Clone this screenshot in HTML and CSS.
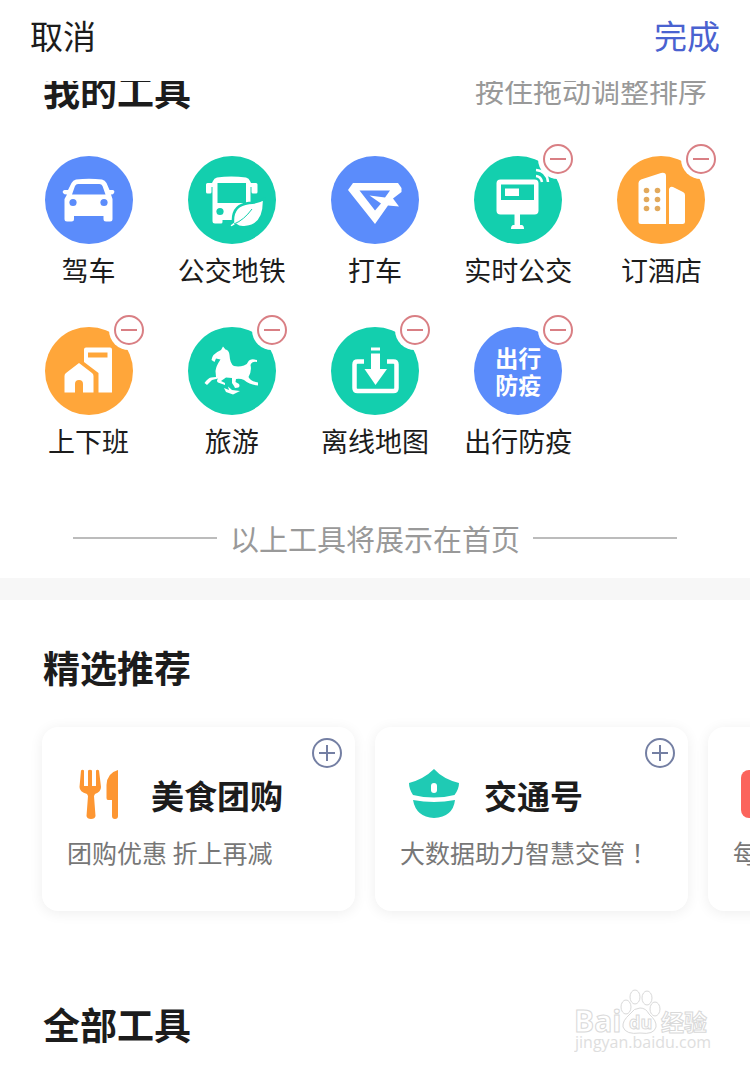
FILE: index.html
```
<!DOCTYPE html>
<html lang="zh-CN">
<head>
<meta charset="UTF-8">
<meta name="viewport" content="width=device-width, initial-scale=1.0">
<title>我的工具</title>
<link rel="stylesheet" href="styles.css">
</head>
<body>

<header class="topbar">
  <button type="button" class="cancel">取消</button>
  <button type="button" class="done">完成</button>
</header>

<main>
  <section class="my-tools">
    <div class="section-head">
      <h2>我的工具</h2>
      <span class="hint">按住拖动调整排序</span>
    </div>

    <ul class="tools">
      <li class="tool">
        <div class="icon blue">
          <svg viewBox="0 0 88 88">
            <path fill="#fff" fill-rule="evenodd" d="M31 23.500Q44 22 57 23.500Q60 24 61.500 27L64.500 34H68Q70 34.500 69 37Q68.500 38.500 66 38.500L67.500 43V63Q67.500 65.500 65 65.500H61Q58.500 65.500 58.500 63V60H29V63Q29 65.500 26.500 65.500H22Q19.500 65.500 19.500 63V43L22 38.500Q19 38.500 18 37Q17 34.500 19.500 34H23L26.500 27Q28 24 31 23.500ZM33 28Q31 28 30 30L27 38.500H60.500L57.500 30Q56.500 28 54.500 28Z"/>
            <circle cx="28" cy="46.500" r="3.600" fill="#5b8cfb"/><circle cx="59" cy="46.500" r="3.600" fill="#5b8cfb"/>
          </svg>
        </div>
        <span class="name">驾车</span>
      </li>
      <li class="tool">
        <div class="icon green">
          <svg viewBox="0 0 88 88">
            <path fill="#fff" fill-rule="evenodd" d="M29 21.500Q43 19.500 58 21.500Q61 22 62 25L63 27H68Q69.500 27 69.500 28.500V36Q69.500 37.500 68 37.500H65Q63.500 37.500 63.500 36V31H62.500V64H34.500V66Q34.500 67.500 33 67.500H27Q24.500 67.500 24.500 65V31H23.500V36Q23.500 37.500 22 37.500H19.500Q18 37.500 18 36V28.500Q18 27 19.500 27H24L25 25Q26 22 29 21.500ZM29.500 27V47H58V27Z"/>
            <circle cx="32" cy="55.500" r="3.600" fill="#13cfae"/>
            <path fill="#fff" stroke="#13cfae" stroke-width="2.500" d="M76 43Q77 69 58 71Q51 72 48 69L43 72L41 69L45 66Q44 49 61 47Q69 47 76 43Z"/>
            <path d="M46 68Q56 64 64 53" fill="none" stroke="#13cfae" stroke-width="1"/>
          </svg>
        </div>
        <span class="name">公交地铁</span>
      </li>
      <li class="tool">
        <div class="icon blue">
          <svg viewBox="0 0 88 88">
            <path fill="#fff" fill-rule="evenodd" d="M22 27H67L70.500 32V36L62 42.500L68 50.500L57 49.500L44 68L17 34ZM28.500 34.500L44 54.500L50 47.500L38.500 39.500L54 41.500L59 34.500Z"/>
          </svg>
        </div>
        <span class="name">打车</span>
      </li>
      <li class="tool">
        <div class="icon green">
          <svg viewBox="0 0 88 88">
            <rect x="22.500" y="23.500" width="42" height="35" rx="4" fill="#fff"/>
            <path d="M27 28.500H60V44H27Z" fill="#13cfae"/>
            <path d="M31 32.500H45V40H31ZM40.500 58H46V69H48Q50 69.500 50 73H37Q37 69.500 39 69H40.500Z" fill="#fff"/>
            <path d="M62 20Q67 20.500 68 26M62 14Q73 15 74 26" fill="none" stroke="#fff" stroke-width="2.500"/>
          </svg>
          <button type="button" class="remove" aria-label="移除实时公交"></button>
        </div>
        <span class="name">实时公交</span>
      </li>
      <li class="tool">
        <div class="icon orange">
          <svg viewBox="0 0 88 88">
            <path fill="#fff" d="M21.500 27Q21.500 24.500 24 23.500L44 17Q49 16 49 20V68H24Q21.500 68 21.500 65.500ZM52 33Q53 30 56 31L66 36Q68 37 68 39V65.500Q68 68 65.500 68H52Z"/>
            <g fill="#e2a95c"><circle cx="29.500" cy="34.500" r="2.800"/><circle cx="40.500" cy="34.500" r="2.800"/><circle cx="29.500" cy="43.500" r="2.800"/><circle cx="40.500" cy="43.500" r="2.800"/><circle cx="29.500" cy="52.500" r="2.800"/><circle cx="40.500" cy="52.500" r="2.800"/></g>
          </svg>
          <button type="button" class="remove" aria-label="移除订酒店"></button>
        </div>
        <span class="name">订酒店</span>
      </li>
      <li class="tool">
        <div class="icon orange">
          <svg viewBox="0 0 88 88">
            <path fill="#fff" fill-rule="evenodd" d="M41 20.500H65Q67 20.500 67 22.500V65.500H53.500V46L39 35V22.500Q39 20.500 41 20.500ZM43 25.500V30.500H62.500V25.500Z"/>
            <path fill="#fff" d="M34 36L47 46Q48.500 47 48.500 49V65.500H38V57Q38 53 34 53Q30 53 30 57V65.500H19.500V49Q19.500 47 21 46Z"/>
          </svg>
          <button type="button" class="remove" aria-label="移除上下班"></button>
        </div>
        <span class="name">上下班</span>
      </li>
      <li class="tool">
        <div class="icon green">
          <svg viewBox="0 0 88 88">
            <path fill="#fff" d="M35 19.500L37.500 22.500Q41 23 41.500 28Q42 37 46 39Q51 40 56 38.500Q59 38 60 35Q62 31 69 33L69 35Q64 34 62.500 38Q64 44 60.500 50Q62 54 70 55.500L70 58.500Q62 58 56 53Q52 51 48 52L47.500 55L51 57Q53 61 47 61L46 59L44 56V51L38 50.500L33 54L37 56V58L30 55.500Q28 54 30 51.500L24 53L19 58L16.500 56Q20 51 23 50.500L28 50L27.500 44Q28 39 32.500 32.500L28 31.500L26.500 35L23.500 33Q24 27 33 23Z"/>
            <path fill="#fff" d="M36 61L41 63L40 59.500L44 63L52 64L48 66L45 67.500L38 65Z"/>
          </svg>
          <button type="button" class="remove" aria-label="移除旅游"></button>
        </div>
        <span class="name">旅游</span>
      </li>
      <li class="tool">
        <div class="icon green">
          <svg viewBox="0 0 88 88">
            <path d="M33 34.500H26.500Q23.500 34.500 23.500 37.500V61Q23.500 64 26.500 64H62.500Q65.500 64 65.500 61V37.500Q65.500 34.500 62.500 34.500H56" fill="none" stroke="#fff" stroke-width="4.500"/>
            <path fill="#fff" d="M40 20.500H49V23.500H40ZM40 26.500H49V42H56L44.500 58L33.500 42H40Z"/>
          </svg>
          <button type="button" class="remove" aria-label="移除离线地图"></button>
        </div>
        <span class="name">离线地图</span>
      </li>
      <li class="tool">
        <div class="icon blue">
          <span class="icon-text">出行<br>防疫</span>
          <button type="button" class="remove" aria-label="移除出行防疫"></button>
        </div>
        <span class="name">出行防疫</span>
      </li>
    </ul>

    <p class="divider">以上工具将展示在首页</p>
  </section>

  <section class="featured">
    <h2>精选推荐</h2>
    <div class="cards">
      <article class="card">
        <button type="button" class="add" aria-label="添加美食团购"></button>
        <div class="card-head">
          <svg viewBox="0 0 64 52">
            <g fill="#fd9632">
              <path d="M14 1.500Q15.500 0 17 1.500V17H21V1.500Q23 0 25 1.500V17H29V1.500Q30.500 0 32 1.500L34 18Q34 23 28 25L27 27L28.500 47Q28 50 24 50Q20 50 19.500 47L21 27L20 25Q12.500 23 12.500 18Z"/>
              <path d="M51 1V47Q51 50 48 50Q45 50 45 47V31H41Q39.500 31 39.500 29V16Q40 4 51 1Z"/>
            </g>
          </svg>
          <h3>美食团购</h3>
        </div>
        <p>团购优惠 折上再减</p>
      </article>
      <article class="card">
        <button type="button" class="add" aria-label="添加交通号"></button>
        <div class="card-head">
          <svg viewBox="0 0 64 52">
            <g fill="#1fcab4">
              <path d="M34 0Q43 10 59 14Q59 20 54.500 26Q34 31 13 26Q9 20 9 14Q24 10 34 0Z"/>
              <path d="M13 31Q34 35 55 31Q53 48 34 49Q16 48 13 31Z"/>
            </g>
            <rect x="31" y="14" width="6" height="10" rx="3" fill="#fff"/>
          </svg>
          <h3>交通号</h3>
        </div>
        <p>大数据助力智慧交管<span class="mark" lang="zh-TW">！</span></p>
      </article>
      <article class="card">
        <div class="card-head">
          <svg viewBox="0 0 64 52"><rect x="8" y="1" width="48" height="48" rx="8" fill="#fb645c"/></svg>
        </div>
        <p>每</p>
      </article>
    </div>
  </section>

  <section class="all-tools">
    <h2>全部工具</h2>
  </section>
</main>

<div class="watermark">
  <svg viewBox="0 0 140 66">
    <g fill="#fff" stroke="#d9d9d9" stroke-width="1">
      <text x="0" y="44" font-size="30" font-weight="bold">Bai</text>
      <ellipse cx="52" cy="19" rx="5" ry="7"/>
      <ellipse cx="61" cy="9" rx="5" ry="7"/>
      <ellipse cx="73" cy="10" rx="5" ry="7"/>
      <ellipse cx="81" cy="21" rx="5" ry="7"/>
      <path d="M66 20Q72 20 75 26Q83 33 82 39Q80 47 66 45Q52 47 49 39Q48 33 56 26Q60 20 66 20Z"/>
      <text x="55" y="41" font-size="18" font-weight="bold">du</text>
      <text x="87" y="43" font-size="23" font-weight="bold">经验</text>
    </g>
    <text x="1" y="60" font-size="16" fill="#dedede">jingyan.baidu.com</text>
  </svg>
</div>

</body>
</html>
```
FILE: styles.css
```
* {
  box-sizing: border-box;
}

body {
  margin: 0;
  background: #fff;
  color: #1c1c1c;
  font-family: "Noto Sans CJK SC", sans-serif;
  position: relative;
  overflow-x: hidden;
}

h2, h3, p, ul {
  margin: 0;
  padding: 0;
}

button {
  border: 0;
  padding: 0;
  background: none;
  font-family: inherit;
  cursor: pointer;
}

h2 {
  font-size: 37px;
  line-height: 40px;
  font-weight: 700;
}

/* top bar stays over the scrolled list */
.topbar {
  position: sticky;
  top: 0;
  z-index: 2;
  display: flex;
  justify-content: space-between;
  padding: 15px 30px 26px;
  background: #fff;
}

.topbar button {
  font-size: 33px;
  line-height: 40px;
}

.cancel {
  color: #1c1c1c;
}

.done {
  color: #4a62d0;
}

.my-tools {
  margin-top: -11px;
  padding-bottom: 20px;
  border-bottom: 22px solid #f7f7f7;
}

.section-head {
  display: flex;
  justify-content: space-between;
  align-items: center;
  padding: 0 43px;
}

.hint {
  font-size: 29px;
  line-height: 40px;
  color: #999;
}

.tools {
  display: grid;
  grid-template-columns: repeat(5, 1fr);
  row-gap: 41px;
  margin-top: 46px;
  padding: 0 17px;
  list-style: none;
}

.tool {
  display: flex;
  flex-direction: column;
  align-items: center;
}

.icon {
  position: relative;
  width: 88px;
  height: 88px;
  border-radius: 50%;
}

.icon svg {
  display: block;
}

.blue {
  background: #5b8cfb;
}

.green {
  background: #13cfae;
}

.orange {
  background: #ffa63a;
}

.icon-text {
  display: block;
  padding-top: 17px;
  font-size: 23px;
  line-height: 27px;
  font-weight: 700;
  text-align: center;
  color: #fff;
}

.name {
  margin-top: 10px;
  font-size: 27px;
  line-height: 32px;
  white-space: nowrap;
}

/* round minus / plus buttons */
.remove, .add {
  position: absolute;
  width: 30px;
  height: 30px;
  border: 2px solid;
  border-radius: 50%;
}

.remove {
  top: -12px;
  right: -11px;
  color: #d97f84;
  background: linear-gradient(#d97f84, #d97f84) center / 16px 2px no-repeat #fff;
  box-shadow: 0 0 0 5px #fff;
}

.add {
  top: 11px;
  right: 13px;
  color: #747fa3;
  background:
    linear-gradient(#747fa3, #747fa3) center / 16px 2px no-repeat,
    linear-gradient(#747fa3, #747fa3) center / 2px 16px no-repeat;
}

.divider {
  display: flex;
  align-items: center;
  gap: 13px;
  margin-top: 61px;
  padding: 0 73px;
  font-size: 29px;
  line-height: 40px;
  color: #999;
  white-space: nowrap;
}

.divider::before, .divider::after {
  content: "";
  flex: 1;
  height: 2px;
  background: #bcbcbc;
}

.featured {
  padding-top: 47px;
}

.featured h2, .all-tools h2 {
  padding: 0 43px;
}

.cards {
  display: flex;
  gap: 20px;
  padding: 40px 42px 24px;
  overflow: hidden;
}

.card {
  position: relative;
  flex: 0 0 313px;
  padding: 42px 25px;
  border-radius: 16px;
  background: #fff;
  box-shadow: 0 2px 14px rgba(0, 0, 0, 0.07);
}

.card-head {
  display: flex;
  align-items: center;
  gap: 20px;
}

.card-head svg {
  width: 64px;
  height: 52px;
}

.card h3 {
  font-size: 33px;
  line-height: 40px;
  font-weight: 700;
}

.card p {
  margin-top: 14px;
  font-size: 25px;
  line-height: 34px;
  color: #777;
  white-space: nowrap;
}

.mark {
  font-family: "Noto Sans CJK TC", sans-serif;
}

.all-tools {
  padding: 69px 0 24px;
}

.watermark {
  position: absolute;
  right: 36px;
  bottom: 14px;
  width: 140px;
  height: 66px;
  font-family: "Open Sans", "Noto Sans CJK SC", sans-serif;
  pointer-events: none;
}
```
